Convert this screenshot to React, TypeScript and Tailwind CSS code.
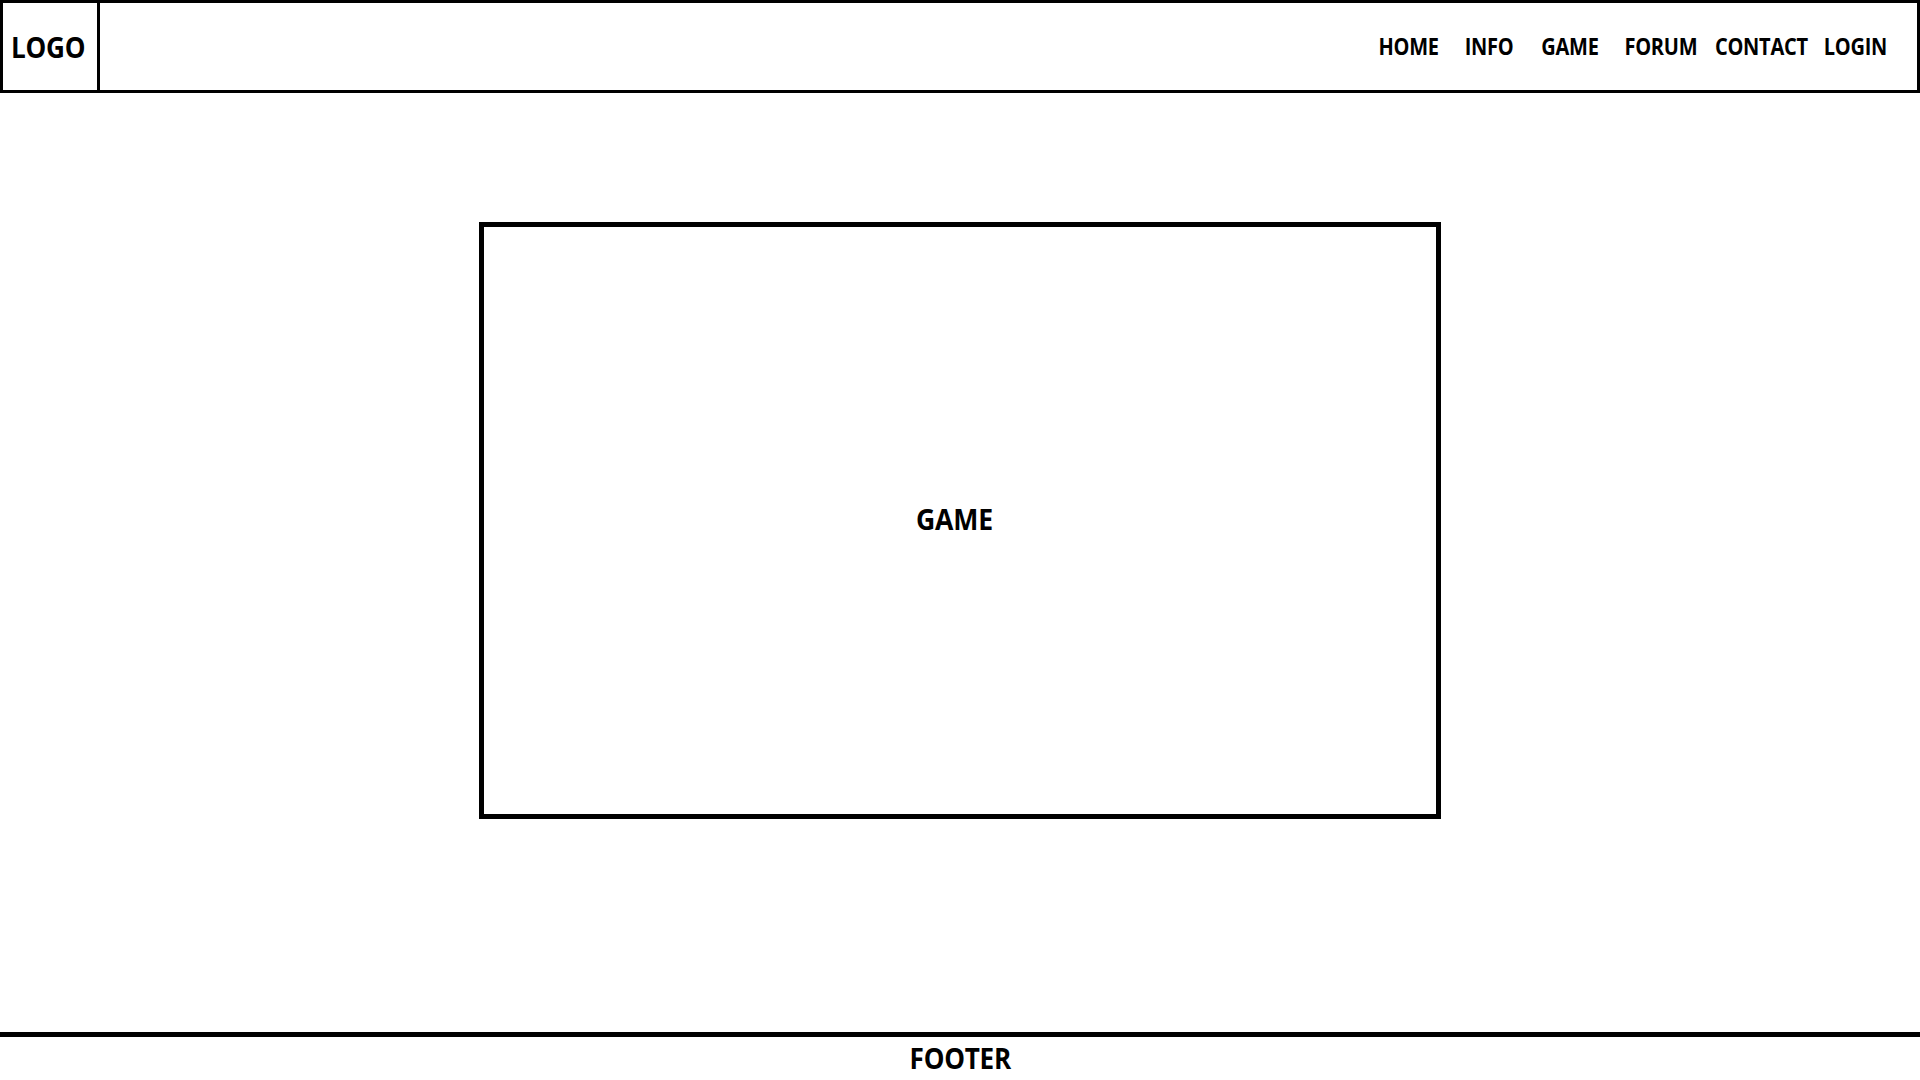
const font = { fontFamily: '"Open Sans", "Liberation Sans", sans-serif' };

const navItems = [
  { label: "HOME", cls: "w-[62px]" },
  { label: "INFO", cls: "ml-[25px] w-[48px]" },
  { label: "GAME", cls: "ml-[27px] w-[59px]" },
  { label: "FORUM", cls: "ml-[25px] w-[73px]" },
  { label: "CONTACT", cls: "ml-[18px] w-[92px]" },
  { label: "LOGIN", cls: "ml-[16px] w-[65px]" },
];

export default function App() {
  return (
    <div
      className="flex h-[1080px] w-[1920px] flex-col overflow-hidden bg-white text-black"
      style={font}
    >
      {/* Header */}
      <header className="flex h-[93px] shrink-0 items-stretch border-[3px] border-black">
        <div className="flex w-[97px] shrink-0 items-center justify-center border-r-[3px] border-black">
          <span className="mr-[4px] inline-block scale-x-[0.9] text-[29px] font-bold tracking-[-0.3px]">LOGO</span>
        </div>
        <nav className="ml-auto flex items-center pr-[29px]">
          {navItems.map((item) => (
            <a
              key={item.label}
              className={`flex justify-center whitespace-nowrap ${item.cls}`}
            >
              <span className="inline-block scale-x-[0.87] text-[23px] font-bold tracking-[-0.3px]">
                {item.label}
              </span>
            </a>
          ))}
        </nav>
      </header>

      {/* Game area */}
      <main className="flex-1">
        <div className="mx-auto mt-[129px] flex h-[597px] w-[962px] items-center justify-center border-[5px] border-black">
          <span className="mb-[4px] mr-[12px] inline-block scale-x-[0.95] text-[28px] font-bold tracking-[-0.2px]">
            GAME
          </span>
        </div>
      </main>

      {/* Footer */}
      <footer className="flex h-[48px] shrink-0 justify-center border-t-[5px] border-black">
        <span className="mt-[1px] inline-block scale-x-[0.9] text-[29px] font-bold leading-[40px] tracking-[-0.3px]">
          FOOTER
        </span>
      </footer>
    </div>
  );
}
